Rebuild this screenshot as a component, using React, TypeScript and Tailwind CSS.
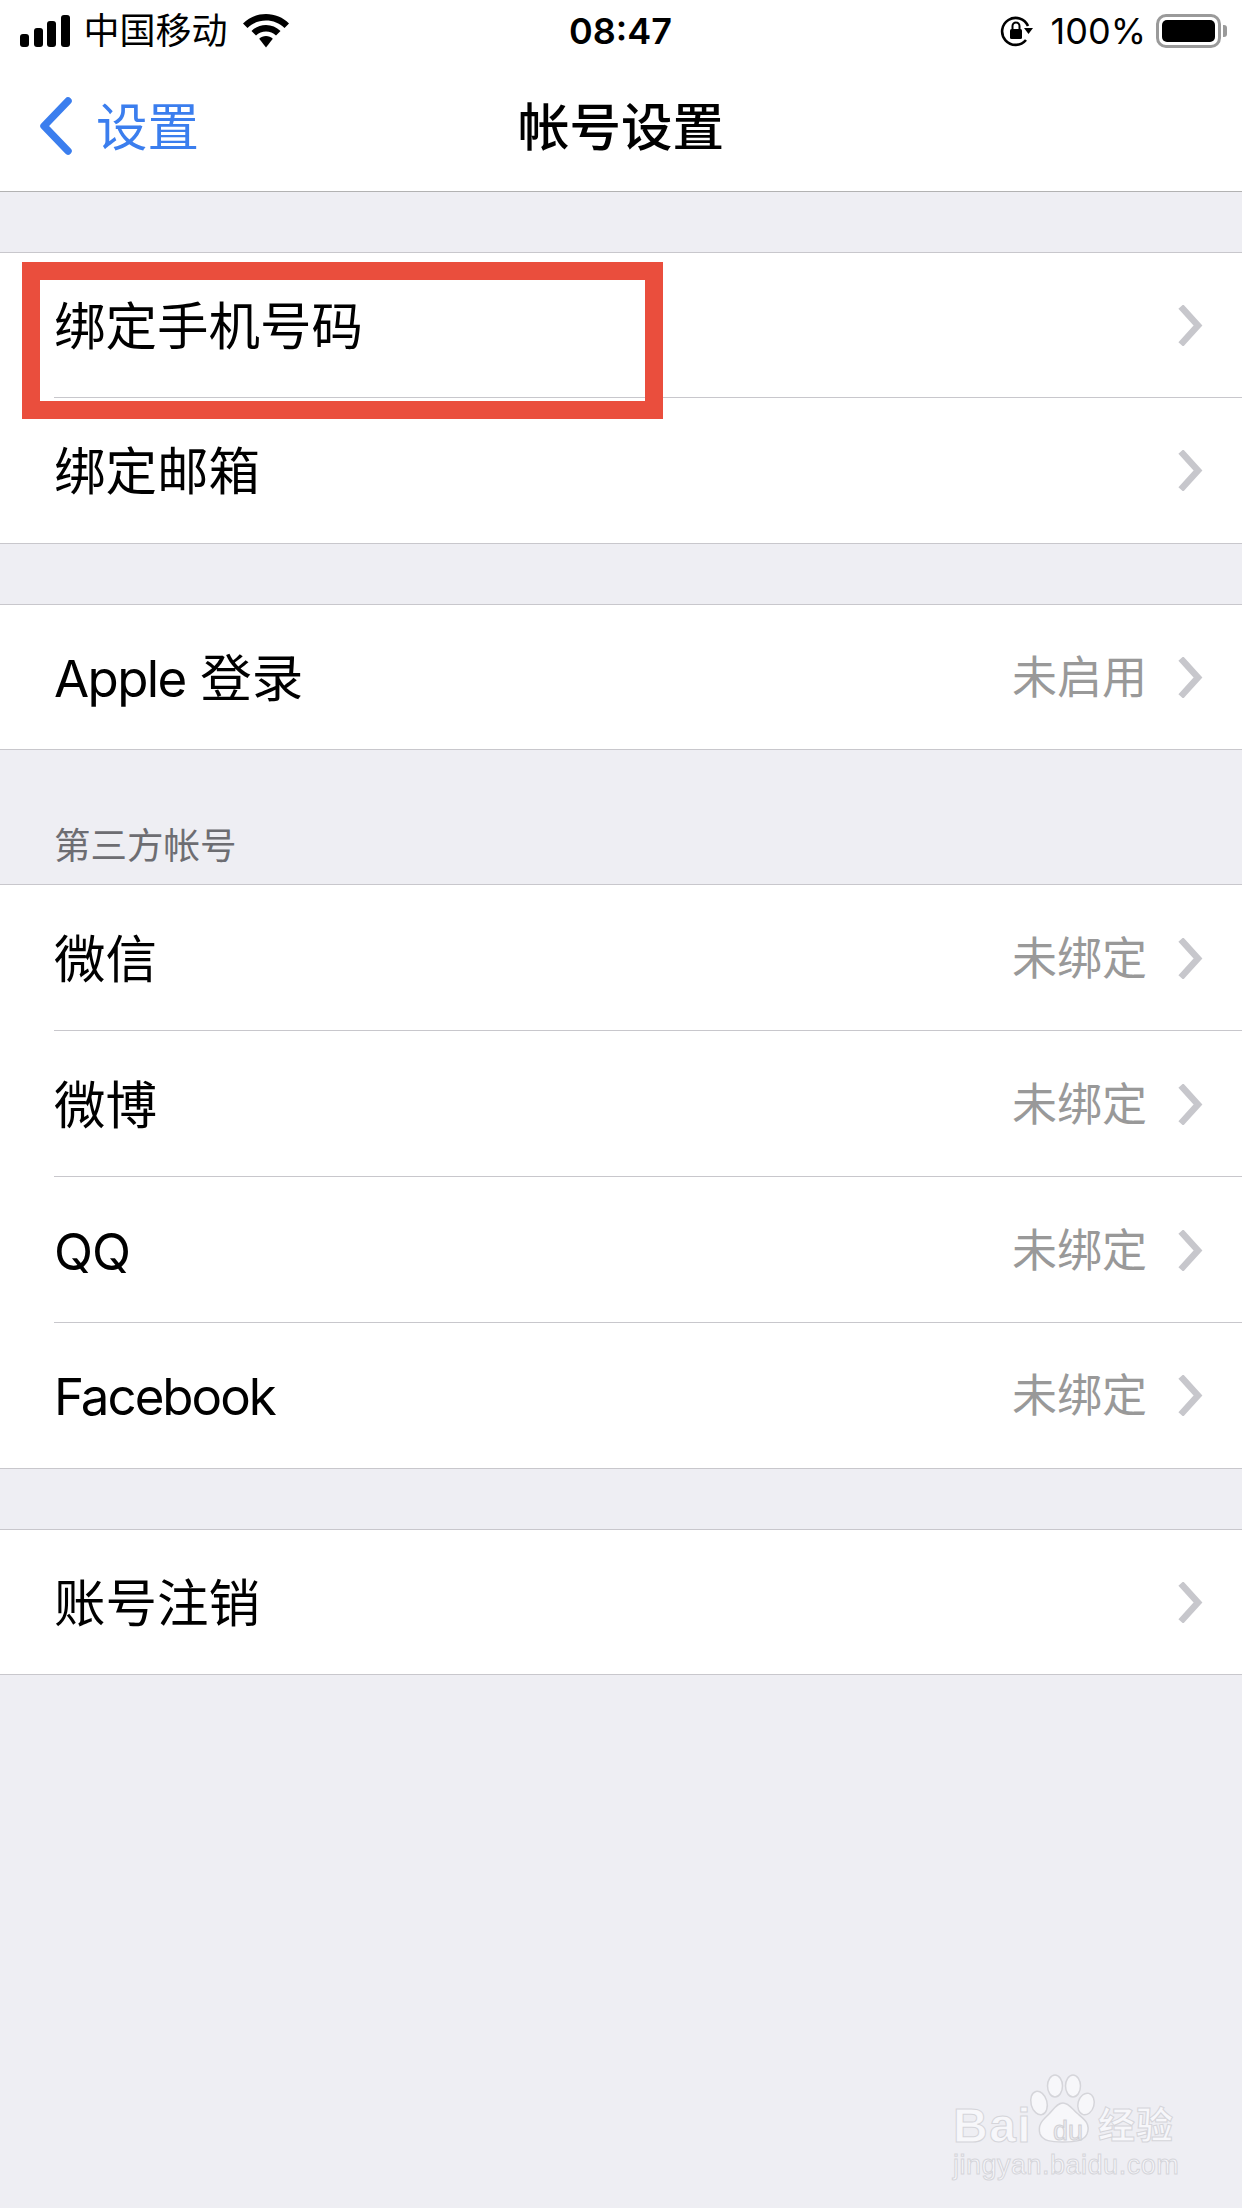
import React from 'react'

const cjk = "font-['Inter','Noto_Sans_CJK_SC',sans-serif]"

function Chevron() {
    return (
        <svg width="26" height="41" viewBox="0 0 26 41" className="shrink-0">
            <path d="M6 4 L21 20.5 L6 37" fill="none" stroke="#c7c7cc" strokeWidth="6.5" strokeLinecap="square" strokeLinejoin="miter" />
        </svg>
    )
}

function Row(props: { label: React.ReactNode, value?: string, last?: boolean, height: string }) {
    const { label, value, last, height } = props
    return (
        <div className={`relative flex items-center pl-[54px] pr-[39px] ${height}`}>
            <span className="mt-[3px] flex-1 text-[51.5px] leading-none text-black">{label}</span>
            {value && <span className="mr-[30px] text-[45px] leading-none text-[#999999]">{value}</span>}
            <Chevron />
            {!last && <div className="absolute bottom-0 left-[54px] right-0 h-px bg-[#c8c7cc]" />}
        </div>
    )
}

function Latin(props: { children: string, tracking: string }) {
    return <span className={`text-[51px] ${props.tracking}`}>{props.children}</span>
}

function Group(props: { children: React.ReactNode, className?: string }) {
    return <div className={`border-y border-[#c8c7cc] bg-white ${props.className ?? ''}`}>{props.children}</div>
}

function StatusBar() {
    return (
        <div className="relative flex h-[62px] items-center bg-white text-black">
            <div className="ml-[20px] flex items-end gap-[4.5px]">
                <div className="h-[13px] w-[9px] rounded-[3px] bg-black" />
                <div className="h-[19px] w-[9px] rounded-[3px] bg-black" />
                <div className="h-[26px] w-[9px] rounded-[3px] bg-black" />
                <div className="h-[32px] w-[9px] rounded-[3px] bg-black" />
            </div>
            <span className="ml-[14px] text-[36px] leading-none">中国移动</span>
            <svg width="46" height="34" viewBox="0 0 46 34" className="ml-[15px]">
                <path d="M23 0 C32 0 40 3.500 46 9.500 L41.500 14 C36.500 9 30 6.500 23 6.500 C16 6.500 9.500 9 4.500 14 L0 9.500 C6 3.500 14 0 23 0 Z" fill="#000" />
                <path d="M23 11 C28.500 11 33.500 13 37.500 17 L33 21.500 C30.300 18.800 26.800 17.500 23 17.500 C19.200 17.500 15.700 18.800 13 21.500 L8.500 17 C12.500 13 17.500 11 23 11 Z" fill="#000" />
                <path d="M23 22 C25.500 22 28 23 29.800 24.800 L23 33.500 L16.200 24.800 C18 23 20.500 22 23 22 Z" fill="#000" />
            </svg>
            <span className="absolute left-[569px] top-[13px] text-[36px] font-semibold leading-[36px]">08:47</span>
            <svg width="34" height="32" viewBox="0 0 34 32" className="ml-auto">
                <path d="M26 25 A13.500 13.500 0 1 1 28 11" fill="none" stroke="#000" strokeWidth="2.600" />
                <path d="M24 13 L33 13 L28.500 19 Z" fill="#000" />
                <rect x="10" y="14" width="12" height="10" rx="1.500" fill="#000" />
                <path d="M12.500 14 V11 A3.500 3.500 0 0 1 19.500 11 V14" fill="none" stroke="#000" strokeWidth="2" />
            </svg>
            <span className="ml-[17px] text-[36px] leading-none">100%</span>
            <div className="ml-[10px] mr-[15px] flex items-center">
                <div className="flex h-[34px] w-[65px] items-center justify-center rounded-[10px] border-[3px] border-[#9a9a9a]">
                    <div className="h-[22px] w-[53px] rounded-[5px] bg-black" />
                </div>
                <div className="ml-[2px] h-[12px] w-[4px] rounded-r-[3px] bg-[#9a9a9a]" />
            </div>
        </div>
    )
}

function NavBar() {
    return (
        <div className="grid h-[130px] grid-cols-3 items-center border-b border-[#b2b2b2] bg-white">
            <div className="flex items-center pl-[39px] text-[#3b7eee]">
                <svg width="34" height="58" viewBox="0 0 34 58" className="mb-[2px]">
                    <path d="M29 4 L5 29 L29 54" fill="none" stroke="#3b7eee" strokeWidth="7.500" strokeLinecap="round" strokeLinejoin="round" />
                </svg>
                <span className="ml-[23px] mt-[2px] text-[51.5px] leading-none">设置</span>
            </div>
            <div className="mt-[2px] text-center text-[51.5px] font-medium leading-none text-black">帐号设置</div>
            <div />
        </div>
    )
}

function Watermark() {
    return (
        <div className="absolute left-[953px] top-[2074px] h-[110px] w-[224px]">
            <svg width="70" height="70" viewBox="0 0 70 70" className="absolute left-[76px] top-0">
                <g fill="#f7f7fa" stroke="#d5d5da" strokeWidth="1.500">
                    <ellipse cx="10" cy="29" rx="8" ry="12" transform="rotate(-15 10 29)" />
                    <ellipse cx="26" cy="12" rx="7.500" ry="11" />
                    <ellipse cx="44" cy="12" rx="7.500" ry="11" />
                    <ellipse cx="57" cy="30" rx="8" ry="11" transform="rotate(15 57 30)" />
                    <path d="M34 29 C40 29 43 35 49 40 C55 45 62 50 58 60 C55 67 46 68 34 68 C22 68 14 67 11 60 C8 50 15 45 20 40 C25 35 28 29 34 29 Z" />
                </g>
            </svg>
            <span className="absolute left-0 top-[28px] font-['Liberation_Sans',sans-serif] text-[48px] font-bold leading-none tracking-[1.5px] text-[#f7f7fa] [-webkit-text-stroke:1px_#d5d5da]">Bai</span>
            <span className="absolute left-[92px] top-[44px] w-[46px] text-center font-['Liberation_Sans',sans-serif] text-[27px] leading-none text-[#ececf0] [-webkit-text-stroke:1px_#d0d0d5]">du</span>
            <span className="absolute left-[145px] top-[33px] text-[37px] font-bold leading-none tracking-[1px] text-[#f7f7fa] [-webkit-text-stroke:1px_#d5d5da]">经验</span>
            <span className="absolute left-0 top-[78px] font-['Liberation_Sans',sans-serif] text-[27px] leading-none tracking-[0.5px] text-[#f7f7fa] [-webkit-text-stroke:1px_#d5d5da]">jingyan.baidu.com</span>
        </div>
    )
}

export default function App() {
    return (
        <div className={`relative h-[2208px] w-[1242px] overflow-hidden bg-[#eeeef3] ${cjk}`}>
            <StatusBar />
            <NavBar />

            <Group className="mt-[60px]">
                <Row label="绑定手机号码" height="h-[145px]" />
                <Row label="绑定邮箱" height="h-[145px]" last />
            </Group>

            <Group className="mt-[60px]">
                <Row label={<><Latin tracking="tracking-[-1.6px]">Apple</Latin> 登录</>} value="未启用" height="h-[144px]" last />
            </Group>

            <div className="flex h-[134px] items-end pb-[20px] pl-[54px] text-[36.500px] leading-none text-[#6d6d72]">第三方帐号</div>
            <Group>
                <Row label="微信" value="未绑定" height="h-[146px]" />
                <Row label="微博" value="未绑定" height="h-[146px]" />
                <Row label={<Latin tracking="tracking-[-1px]">QQ</Latin>} value="未绑定" height="h-[146px]" />
                <Row label={<Latin tracking="tracking-[-2px]">Facebook</Latin>} value="未绑定" height="h-[145px]" last />
            </Group>

            <Group className="mt-[60px]">
                <Row label="账号注销" height="h-[144px]" last />
            </Group>

            {/* red mark drawn over the first row */}
            <div className="absolute left-[22px] top-[262px] h-[157px] w-[641px] border-[18px] border-[#ea4e3d]" />

            <Watermark />
        </div>
    )
}
